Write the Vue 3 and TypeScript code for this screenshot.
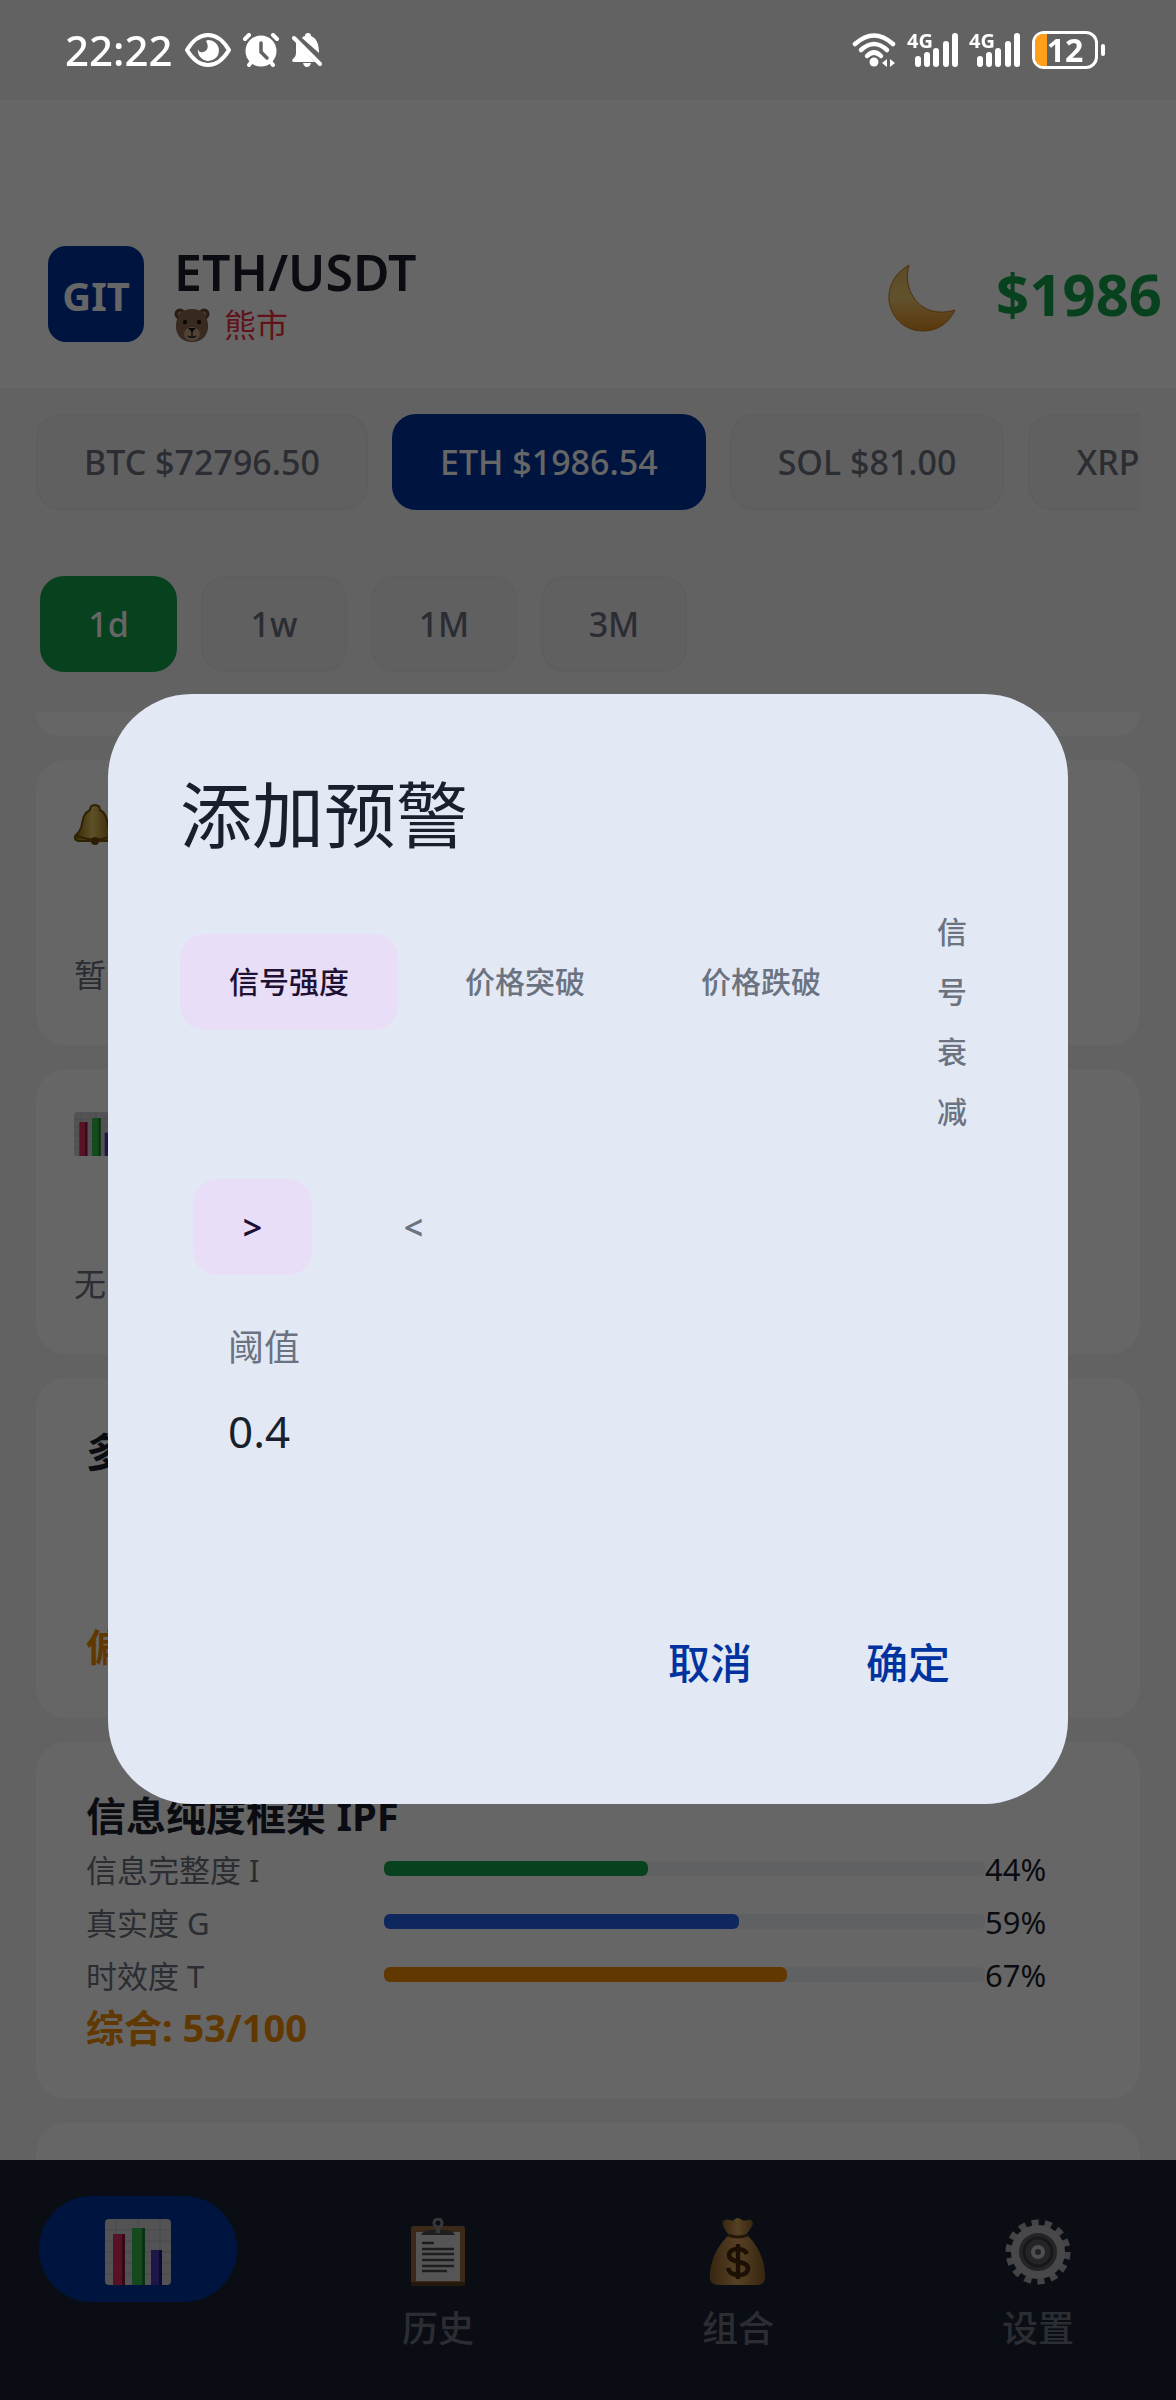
<script setup lang="ts">
import { ref } from 'vue'

interface Ticker { label: string; symbol: string }
interface Metric { label: string; value: number; color: string }

const tickers: Ticker[] = [
  { label: 'BTC $72796.50', symbol: 'BTC' },
  { label: 'ETH $1986.54', symbol: 'ETH' },
  { label: 'SOL $81.00', symbol: 'SOL' },
  { label: 'XRP', symbol: 'XRP' },
]
const periods: string[] = ['1d', '1w', '1M', '3M']
const metrics: Metric[] = [
  { label: '信息完整度 I', value: 44, color: '#16a34a' },
  { label: '真实度 G', value: 59, color: '#2563eb' },
  { label: '时效度 T', value: 67, color: '#f08c00' },
]
const alertTypes: string[] = ['信号强度', '价格突破', '价格跌破']
const lastType = '信号衰减'
const operators: string[] = ['>', '<']
const signalBars = [
  { x: 7, h: 11 }, { x: 16, h: 15 }, { x: 25, h: 19 }, { x: 35, h: 26 }, { x: 44, h: 34 },
]

const symbol = ref('ETH')
const period = ref('1d')
const alertType = ref('信号强度')
const operator = ref('>')
const threshold = ref('0.4')
</script>

<template>
  <div class="app">
    <svg class="defs" aria-hidden="true">
      <defs>
        <linearGradient id="moonFill" x1="0" y1="0" x2="0" y2="1">
          <stop offset="0" stop-color="#e8b95a" /><stop offset=".5" stop-color="#f2cd74" /><stop offset="1" stop-color="#e08a1c" />
        </linearGradient>
        <linearGradient id="bagFill" x1="0" y1="0" x2="1" y2="0">
          <stop offset="0" stop-color="#8a5e28" /><stop offset=".5" stop-color="#d9a35c" /><stop offset="1" stop-color="#8a5e28" />
        </linearGradient>
        <linearGradient id="bellFill" x1="0" y1="0" x2="1" y2="0">
          <stop offset="0" stop-color="#8f6a10" /><stop offset=".45" stop-color="#e8c860" /><stop offset="1" stop-color="#86600a" />
        </linearGradient>
        <symbol id="chart" viewBox="0 0 66 66">
          <rect width="66" height="66" rx="4" fill="#d0d0d4" />
          <path d="M0 11H66M0 22H66M0 33H66M0 44H66M0 55H66M11 0V66M33 0V66M55 0V66" stroke="#b4b4ba" stroke-width="1" />
          <path d="M8 15h12v51H8z" fill="#dd2e5d" /><path d="M17 15h3v51h-3z" fill="#8c1238" />
          <path d="M27 9h13v57H27z" fill="#32b84c" /><path d="M37 9h3v57h-3z" fill="#178233" />
          <path d="M46 31h11v35H46z" fill="#4b35b5" /><path d="M54 31h3v35h-3z" fill="#24137e" />
        </symbol>
      </defs>
    </svg>

    <div class="page">
      <header class="header">
        <div class="logo">GIT</div>
        <div class="pair">
          <h1 class="pair-name">ETH/USDT</h1>
          <p class="market">
            <svg class="bear" viewBox="0 0 36 34" aria-hidden="true">
              <circle cx="6" cy="6" r="5.500" fill="#6b4a34" /><circle cx="30" cy="6" r="5.500" fill="#6b4a34" />
              <circle cx="6" cy="6" r="2.500" fill="#b08a6c" /><circle cx="30" cy="6" r="2.500" fill="#b08a6c" />
              <path d="M18 1C8 1 3 7 2 16c-1 11 6 18 16 18s17-7 16-18C33 7 28 1 18 1z" fill="#8d6a50" />
              <ellipse cx="18" cy="26" rx="8" ry="7" fill="#c9a988" />
              <circle cx="11" cy="14" r="2.200" fill="#1c120c" /><circle cx="25" cy="14" r="2.200" fill="#1c120c" />
              <path d="M14 20h8l-4 4z" fill="#1c120c" /><path d="M14 28q4 3 8 0M18 23v6" fill="none" stroke="#1c120c" stroke-width="1.200" />
            </svg>
            <span>熊市</span>
          </p>
        </div>
        <button class="theme" type="button" aria-label="切换主题">
          <svg viewBox="0 0 68 68" width="68" height="68">
            <path d="M21 1C7 9 0 22 1 36c2 18 16 31 34 31 15 0 26-8 32-21-17 5-32 1-41-12C19 24 18 12 21 1z" fill="url(#moonFill)" stroke="#c47a1c" stroke-width="1" />
          </svg>
        </button>
        <strong class="price">$1986</strong>
      </header>

      <div class="tickers">
        <button v-for="t in tickers" :key="t.symbol" type="button" class="pill" :class="{ on: symbol === t.symbol }" @click="symbol = t.symbol">{{ t.label }}</button>
      </div>
      <div class="periods">
        <button v-for="p in periods" :key="p" type="button" class="pill period" :class="{ live: period === p }" @click="period = p">{{ p }}</button>
      </div>

      <main class="feed">
        <section class="card tail"></section>
        <section class="card note">
          <div class="note-icon">
            <svg viewBox="0 0 42 42" width="42" height="42" aria-hidden="true">
              <path d="M21 1c3 0 5 2 5 5 6 3 7 9 8 16 1 5 3 7 6 10 1 3-1 5-4 5H5c-3 0-5-2-4-5 4-4 6-6 7-12 1-6 2-11 8-14 0-3 2-5 5-5z" fill="url(#bellFill)" stroke="#77560a" stroke-width="2" />
              <path d="M3 32q18 7 36 0" fill="none" stroke="#77560a" stroke-width="2" /><circle cx="21" cy="37" r="4" fill="#6b480a" />
            </svg>
          </div>
          <p>暂</p>
        </section>
        <section class="card note">
          <div class="note-icon"><svg width="44" height="44" aria-hidden="true"><use href="#chart" /></svg></div>
          <p>无</p>
        </section>
        <section class="card panel">
          <h2>多</h2>
          <p class="total apart">偏</p>
        </section>
        <section class="card panel">
          <h2>信息纯度框架 IPF</h2>
          <div v-for="m in metrics" :key="m.label" class="metric">
            <span class="metric-label">{{ m.label }}</span>
            <div class="track"><div class="fill" :style="{ width: m.value + '%', background: m.color }"></div></div>
            <span class="metric-value">{{ m.value }}%</span>
          </div>
          <p class="total">综合: 53/100</p>
        </section>
        <section class="card next"></section>
      </main>

      <nav class="nav">
        <a href="#home" class="tab active" aria-label="首页">
          <span class="tab-icon"><svg width="66" height="66"><use href="#chart" /></svg></span>
        </a>
        <a href="#history" class="tab">
          <span class="tab-icon">
            <svg width="66" height="68" viewBox="0 0 66 68">
              <rect x="6" y="8" width="54" height="60" rx="3" fill="#96683a" /><rect x="6" y="64" width="54" height="4" fill="#5c3c1e" />
              <path d="M11 14h44v49H11z" fill="#d4d4d6" />
              <path d="M16 17q2-5 11-5h12q9 0 11 5z" fill="#4f4f54" /><circle cx="33" cy="5" r="4" fill="none" stroke="#8d8d92" stroke-width="3" /><path d="M33 9v6" stroke="#8d8d92" stroke-width="4" />
              <path d="M17 25h12M17 31h32M17 36h32M17 42h32M17 48h32M17 53h25" stroke="#4a4a4e" stroke-width="2.500" />
            </svg>
          </span>
          <span class="tab-label">历史</span>
        </a>
        <a href="#portfolio" class="tab">
          <span class="tab-icon">
            <svg width="66" height="68" viewBox="0 0 66 68">
              <path d="M24 17C18 9 15 4 20 2c4-2 6 2 9 0 3-3 5-2 8 0 4 2 7-2 10 1s-2 8-6 14z" fill="url(#bagFill)" />
              <path d="M24 17h18c9 8 17 22 18 38 1 9-2 12-9 12H14c-7 0-10-3-9-12 1-16 10-30 19-38z" fill="url(#bagFill)" />
              <path d="M23 17q10 4 20 0" fill="none" stroke="#5b3a12" stroke-width="3" />
              <path d="M42 36c-2-4-5-5-9-5-6 0-9 3-9 6 0 9 19 5 19 13 0 5-4 7-9 7-6 0-10-2-11-7M33 26v35" fill="none" stroke="#46290a" stroke-width="4.500" />
            </svg>
          </span>
          <span class="tab-label">组合</span>
        </a>
        <a href="#settings" class="tab">
          <span class="tab-icon">
            <svg width="66" height="66" viewBox="0 0 66 66">
              <circle cx="33" cy="33" r="29" fill="none" stroke="#aaaaae" stroke-width="7" stroke-dasharray="7 6.013" />
              <circle cx="33" cy="33" r="23" fill="#5d5d64" stroke="#b4b4b8" stroke-width="8" />
              <circle cx="33" cy="33" r="14" fill="none" stroke="#3c3c43" stroke-width="3" />
              <circle cx="33" cy="33" r="5" fill="#55555c" stroke="#c2c2c6" stroke-width="4" />
            </svg>
          </span>
          <span class="tab-label">设置</span>
        </a>
      </nav>
    </div>

    <div class="scrim">
      <form class="dialog" role="dialog" aria-labelledby="dialog-title" @submit.prevent>
        <h2 id="dialog-title" class="dialog-title">添加预警</h2>
        <div class="types">
          <div class="types-main">
            <button v-for="t in alertTypes" :key="t" type="button" class="choice" :class="{ chosen: alertType === t }" @click="alertType = t">{{ t }}</button>
          </div>
          <button type="button" class="choice narrow" :class="{ chosen: alertType === lastType }" @click="alertType = lastType">{{ lastType }}</button>
        </div>
        <div class="operators">
          <button v-for="o in operators" :key="o" type="button" class="choice op" :class="{ chosen: operator === o }" @click="operator = o">{{ o }}</button>
        </div>
        <div class="field">
          <label for="threshold">阈值</label>
          <input id="threshold" v-model="threshold" type="text" inputmode="decimal" />
        </div>
        <div class="actions">
          <button type="button">取消</button>
          <button type="submit">确定</button>
        </div>
      </form>
    </div>

    <div class="status">
      <span class="clock">22:22</span>
      <svg class="eye" width="46" height="34" viewBox="0 0 46 34">
        <path d="M2 17C8 7 15 2 23 2s15 5 21 15c-6 10-13 15-21 15S8 27 2 17z" fill="none" stroke="#fff" stroke-width="4" stroke-linejoin="round" />
        <path d="M23 7a10.500 10.500 0 1 1-10 9q1 4 5 3c5-1 6-6 3-11z" fill="#fff" />
      </svg>
      <svg class="alarm" width="36" height="34" viewBox="0 0 36 34">
        <circle cx="18" cy="18" r="15.500" fill="#fff" />
        <path d="M2 6l4-4M34 6l-4-4M6 32l4-5M30 32l-4-5" stroke="#fff" stroke-width="4" stroke-linecap="round" />
        <path d="M18 10v9l6 6" fill="none" stroke="#626264" stroke-width="3.500" stroke-linecap="round" />
      </svg>
      <svg class="muted" width="32" height="34" viewBox="0 0 32 34">
        <path d="M5 9l19 20H2q-2-2 1-4 2-2 2-5z" fill="#fff" />
        <path d="M11 5q1-2 3-2 0-3 3-3t3 3c5 2 8 7 8 17z" fill="#fff" />
        <path d="M3 5l26 26" stroke="#fff" stroke-width="4" stroke-linecap="round" />
        <path d="M12 30h8q-1 4-4 4t-4-4z" fill="#fff" />
      </svg>
      <span class="spacer"></span>
      <svg width="44" height="34" viewBox="0 0 44 34">
        <g fill="none" stroke="#fff" stroke-width="4.500" stroke-linecap="round">
          <path d="M3 11Q22-6 41 11" /><path d="M9 17Q22 5 35 17" /><path d="M15 23Q22 16 29 23" />
        </g>
        <circle cx="22" cy="29" r="4.500" fill="#fff" />
        <path d="M35 26v8l-5-4zM38 34v-8l5 4z" fill="#fff" />
      </svg>
      <span v-for="n in 2" :key="n" class="signal">
        <span class="net">4G</span>
        <svg width="50" height="34" viewBox="0 0 50 34">
          <rect v-for="b in signalBars" :key="b.x" :x="b.x" :y="34 - b.h" width="6" :height="b.h" rx="3" fill="#fff" />
        </svg>
      </span>
      <span class="battery"><span class="level"></span><span class="charge">12</span></span>
    </div>
  </div>
</template>

<style>
body { margin: 0; }
</style>

<style scoped>
.app {
  font-family: "Noto Sans", "Noto Sans CJK SC", sans-serif;
  color: #1a1f2e;
}
.app *, .app *::before, .app *::after { box-sizing: border-box; }
button, input { font: inherit; color: inherit; margin: 0; }
button { border: 0; background: none; padding: 0; cursor: pointer; }
h1, h2, p { margin: 0; }
svg { display: block; flex: none; }
.defs { position: absolute; width: 0; height: 0; }

.page {
  display: flex;
  flex-direction: column;
  height: 100vh;
  padding-top: 100px;
  background: #f4f4f8;
  overflow: hidden;
}
.header {
  display: flex;
  align-items: center;
  padding: 146px 14px 46px 48px;
  background: #fff;
}
.logo {
  width: 96px;
  height: 96px;
  border-radius: 18px;
  background: #0033a0;
  color: #fff;
  font-size: 40px;
  font-weight: 700;
  line-height: 100px;
  text-align: center;
}
.pair { margin-left: 30px; flex: 1; }
.pair-name { font-size: 50px; line-height: 52px; font-weight: 600; }
.market {
  display: flex;
  align-items: center;
  gap: 14px;
  margin-top: 10px;
  font-size: 32px;
  line-height: 34px;
  color: #ef3340;
}
.bear { width: 36px; height: 34px; }
.theme { margin-right: 40px; padding-top: 8px; }
.price { font-size: 58px; line-height: 72px; font-weight: 700; color: #16a34a; }

.tickers, .periods { display: flex; flex: none; gap: 24px; }
.tickers { margin: 26px 36px 0; overflow: hidden; }
.periods { margin: 66px 40px 40px; }
.pill {
  flex: none;
  height: 96px;
  padding: 0 46px;
  border: 2px solid #ebebef;
  border-radius: 24px;
  background: #f0f0f3;
  color: #6b7280;
  font-size: 34px;
  font-weight: 500;
  white-space: nowrap;
}
.period { width: 146px; padding: 0; }
.pill.on { background: #0033a0; border-color: #0033a0; color: #fff; }
.pill.live { width: 137px; background: #16a34a; border-color: #16a34a; color: #fff; }

.feed {
  flex: 1;
  min-height: 0;
  display: flex;
  flex-direction: column;
  gap: 24px;
  padding: 0 36px;
  overflow: hidden;
}
.card { flex: none; border-radius: 30px; background: #fff; }
.tail { height: 24px; border-radius: 0 0 24px 24px; }
.next { height: 120px; }
.note { padding: 36px 38px 46px; font-size: 32px; line-height: 48px; color: #6b7280; }
.note-icon { display: flex; align-items: center; height: 58px; margin-bottom: 97px; }
.panel { padding: 48px 50px 46px; }
.panel h2 { font-size: 40px; line-height: 52px; font-weight: 700; }
.total { font-size: 38px; line-height: 52px; font-weight: 700; color: #f08c00; }
.apart { margin-top: 142px; }
.metric { display: flex; align-items: center; height: 53px; font-size: 31px; }
.metric-label { width: 298px; color: #6b7280; }
.track { flex: 1; height: 15px; border-radius: 6px; background: #eff2f4; }
.fill { height: 100%; border-radius: 6px; }
.metric-value { width: 105px; }

.nav {
  flex: none;
  display: grid;
  grid-template-columns: repeat(4, 1fr);
  column-gap: 24px;
  height: 240px;
  padding-top: 36px;
  background: #1a2332;
}
.tab {
  display: flex;
  flex-direction: column;
  align-items: center;
  color: #6b7280;
  text-decoration: none;
}
.tab-icon {
  display: flex;
  align-items: center;
  justify-content: center;
  width: 198px;
  height: 106px;
  padding-top: 6px;
  border-radius: 53px;
}
.active .tab-icon { background: #0033a0; }
.tab-label { font-size: 36px; line-height: 54px; font-weight: 500; }

.scrim {
  position: fixed;
  inset: 0;
  display: flex;
  align-items: center;
  padding: 98px 108px 0;
  background: rgba(0, 0, 0, .6);
}
.dialog {
  flex: 1;
  min-width: 0;
  padding: 70px 72px 96px;
  border-radius: 84px;
  background: #e2e9f5;
}
.dialog-title { font-size: 72px; line-height: 100px; font-weight: 400; }
.types { display: flex; align-items: flex-start; gap: 18px; margin-top: 36px; }
.types-main { display: flex; gap: 18px; padding-top: 34px; }
.choice {
  flex: none;
  height: 96px;
  padding: 0 47px;
  border: 2px solid #e4e8f4;
  border-radius: 24px;
  color: #6b7280;
  font-size: 30px;
  line-height: 60px;
  font-weight: 500;
}
.choice.chosen { background: #e8def8; border-color: #e8def8; color: #1d1233; }
.narrow { flex: 1; min-width: 0; height: 240px; text-align: left; border-color: transparent; }
.operators { display: flex; gap: 42px; margin: 39px 0 0 13px; }
.op { width: 119px; font-size: 34px; font-weight: 600; }
.field {
  margin-top: 25px;
  padding: 22px 46px 48px;
  border: 2px solid #e4e8f4;
  border-radius: 24px;
}
.field label { display: block; font-size: 36px; line-height: 48px; color: #6b7280; }
.field input {
  display: block;
  width: 100%;
  height: 72px;
  margin-top: 23px;
  padding: 0;
  border: 0;
  outline: 0;
  background: none;
  font-size: 44px;
}
.actions { display: flex; justify-content: flex-end; gap: 22px; margin-top: 95px; }
.actions button {
  height: 96px;
  padding: 0 46px;
  color: #0033a0;
  font-size: 42px;
  font-weight: 500;
}

.status {
  position: fixed;
  inset: 0 0 auto;
  display: flex;
  align-items: center;
  height: 100px;
  padding: 0 78px 0 65px;
  color: #fff;
}
.clock { font-size: 42px; line-height: 60px; font-weight: 500; }
.eye, .alarm, .muted { margin-left: 12px; }
.spacer { flex: 1; }
.signal { position: relative; margin-left: 12px; }
.net { position: absolute; left: -1px; top: -3px; font-size: 20px; line-height: 22px; font-weight: 700; }
.battery {
  position: relative;
  display: flex;
  align-items: center;
  justify-content: center;
  width: 66px;
  height: 38px;
  margin-left: 12px;
  border: 3px solid #fff;
  border-radius: 12px;
}
.battery::after {
  content: "";
  position: absolute;
  right: -10px;
  top: 10px;
  width: 4px;
  height: 12px;
  border-radius: 2px;
  background: #fff;
}
.level {
  position: absolute;
  inset: 0 auto 0 0;
  width: 12px;
  border-radius: 8px 0 0 8px;
  background: #ff9f1a;
}
.charge { position: relative; font-size: 32px; line-height: 32px; font-weight: 700; }
</style>
